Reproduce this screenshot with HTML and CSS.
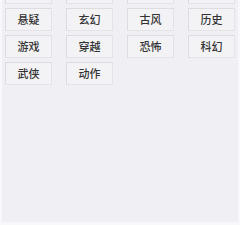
FILE: index.html
```html
<!DOCTYPE html>
<html lang="zh">
  <head>
    <meta charset="UTF-8" />
    <meta name="viewport" content="width=device-width, initial-scale=1">
    <title>分类</title>
    <link rel="stylesheet" href="styles.css">
  </head>
  <body>
    <div class="panel">
      <ul class="tag_list">
        <li class="tag tag_cut"></li>
        <li class="tag tag_cut"></li>
        <li class="tag tag_cut"></li>
        <li class="tag tag_cut"></li>
        <li class="tag">悬疑</li>
        <li class="tag">玄幻</li>
        <li class="tag">古风</li>
        <li class="tag">历史</li>
        <li class="tag">游戏</li>
        <li class="tag">穿越</li>
        <li class="tag">恐怖</li>
        <li class="tag">科幻</li>
        <li class="tag">武侠</li>
        <li class="tag">动作</li>
      </ul>
    </div>
  </body>
</html>
```

FILE: styles.css
```css
* {padding:0; margin:0; box-sizing: border-box;}
html, body {height: 100%; overflow: hidden;}
body {background: #f8f8fa; font-family: "Noto Sans CJK SC", sans-serif; padding: 0 2px 3px;}
.panel {height: 100%; background: #efeff4; padding: 0 3px;}
.tag_list {list-style: none; display: grid; grid-template-columns: repeat(4, 47px); column-gap: 14px; row-gap: 4px;}
.tag {height: 23px; line-height: 21px; text-align: center; font-size: 11px; font-weight: 500; color: #333; background: #f3f3f6; border: 1px solid #e3e3e8; border-top-color: #dcdce1; border-left-color: #dcdce1;}
.tag_cut {height: 4px; border-top: 0;}
```
